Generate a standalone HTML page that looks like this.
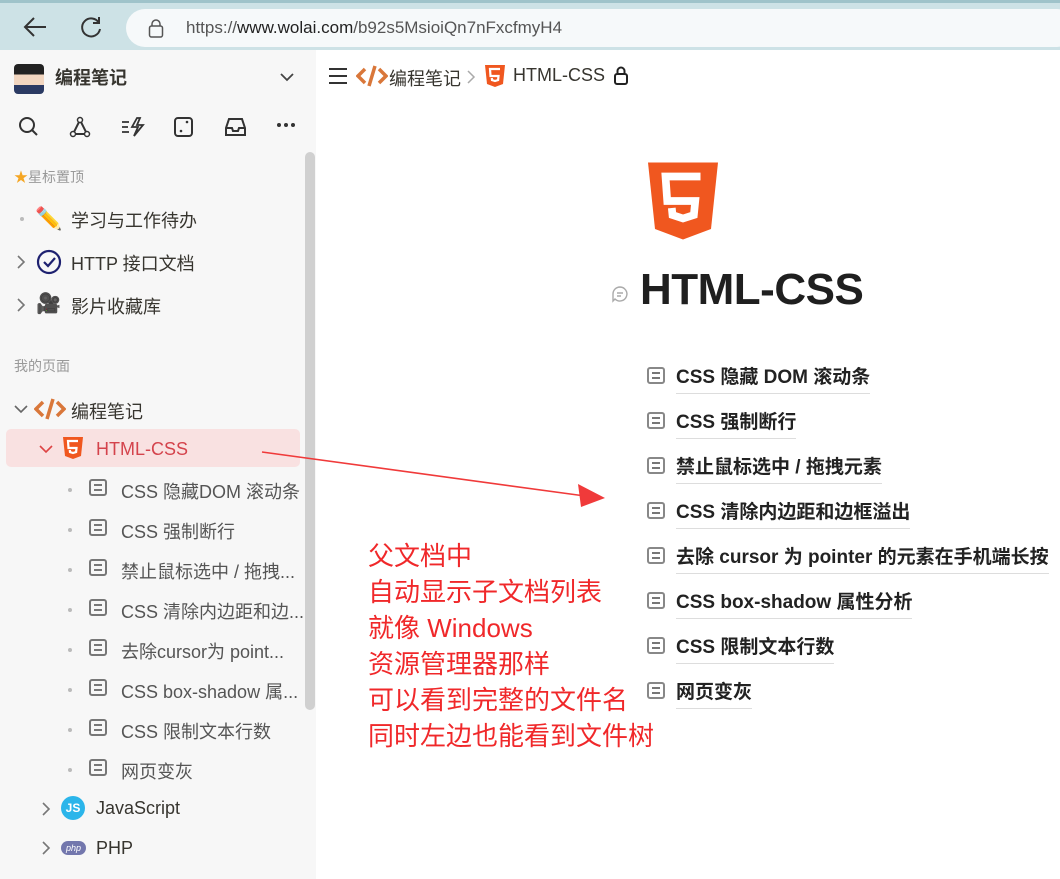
<!DOCTYPE html>
<html><head><meta charset="utf-8"><style>
*{margin:0;padding:0;box-sizing:border-box}
body{width:1060px;height:879px;overflow:hidden;font-family:"Liberation Sans","Noto Sans CJK SC",sans-serif;background:#fff;position:relative;color:#37352f}
.top{position:absolute;left:0;top:0;width:1060px;height:50px;background:#cde2e6;border-top:3px solid #9fc3ca}
.addr{position:absolute;left:126px;top:6px;width:950px;height:38px;background:#f6f9fa;border-radius:19px;font-size:17px;color:#555;line-height:38px;padding-left:60px}
.addr b{font-weight:normal;color:#222}
.side{position:absolute;left:0;top:50px;width:316px;height:829px;background:#f7f7f7}
.sb{position:absolute;left:305px;top:152px;width:10px;height:558px;background:#d0d0d0;border-radius:5px}
.t{position:absolute;font-size:18px;color:#37352f;white-space:nowrap}
.g{position:absolute;font-size:14px;color:#999}
.dot{position:absolute;width:4px;height:4px;border-radius:2px;background:#bbb}
.doc{position:absolute;width:18px;height:17px;border:2px solid #777;border-radius:3px}
.doc:before,.doc:after{content:"";position:absolute;left:3px;width:8px;height:2px;background:#777}
.doc:before{top:3px}.doc:after{top:8px}
.mt{position:absolute;font-size:19px;font-weight:bold;color:#222;white-space:nowrap;border-bottom:1px solid #ddd;padding-bottom:4px}
.red{position:absolute;left:368px;font-size:26px;color:#f0282a;white-space:nowrap;line-height:36px}
.cr{position:absolute}
</style></head><body>
<div class="top">
<svg style="position:absolute;left:22px;top:12px" width="26" height="24" viewBox="0 0 26 24"><path d="M24 12H3M12 3L3 12l9 9" stroke="#333" stroke-width="2" fill="none"/></svg>
<svg style="position:absolute;left:78px;top:11px" width="26" height="26" viewBox="0 0 26 26"><path d="M21 9A9 9 0 1 0 22 15M21 3v6h-6" stroke="#333" stroke-width="2" fill="none"/></svg>
<div class="addr"><svg style="position:absolute;left:22px;top:10px" width="16" height="19" viewBox="0 0 16 19"><rect x="1.5" y="7" width="13" height="11" rx="2" stroke="#555" stroke-width="1.5" fill="none"/><path d="M4 7V5a4 4 0 0 1 8 0v2" stroke="#555" stroke-width="1.5" fill="none"/></svg>https://<b>www.wolai.com</b>/b92s5MsioiQn7nFxcfmyH4</div>
</div>
<div class="side">
<div style="position:absolute;left:14px;top:14px;width:30px;height:30px;border-radius:4px;background:linear-gradient(#222 0 35%,#f2d6c0 35% 70%,#2b3a63 70%)"></div>
<div class="t" style="left:55px;top:14px;font-weight:bold">编程笔记</div>
<svg style="position:absolute;left:280px;top:22px" width="14" height="10"><path d="M1 2l6 6 6-6" stroke="#444" stroke-width="1.8" fill="none"/></svg>
<svg style="position:absolute;left:18px;top:66px" width="22" height="22"><circle cx="9" cy="9" r="7" stroke="#333" stroke-width="2" fill="none"/><path d="M14 14l5 5" stroke="#333" stroke-width="2"/></svg>
<svg style="position:absolute;left:69px;top:66px" width="22" height="22"><path d="M11 4L4 18h14z" stroke="#333" stroke-width="2" fill="none"/><circle cx="11" cy="4" r="2.5" fill="#fff" stroke="#333" stroke-width="1.5"/><circle cx="4" cy="18" r="2.5" fill="#fff" stroke="#333" stroke-width="1.5"/><circle cx="18" cy="18" r="2.5" fill="#fff" stroke="#333" stroke-width="1.5"/></svg>
<svg style="position:absolute;left:121px;top:66px" width="24" height="22"><path d="M1 6h7M1 11h6M1 16h7M16 2l-5 9h6l-4 9 9-11h-6l3-7z" stroke="#333" stroke-width="1.8" fill="none"/></svg>
<svg style="position:absolute;left:173px;top:66px" width="22" height="22"><rect x="2" y="2" width="17" height="18" rx="3" stroke="#333" stroke-width="2" fill="none"/><circle cx="14" cy="6" r="1.3" fill="#333"/><circle cx="8" cy="15" r="1.3" fill="#333"/></svg>
<svg style="position:absolute;left:224px;top:66px" width="24" height="22"><path d="M2 12l3-9h13l3 9v7H2zM2 12h6l1 3h5l1-3h6" stroke="#333" stroke-width="2" fill="none"/></svg>
<svg style="position:absolute;left:276px;top:72px" width="20" height="6"><circle cx="3" cy="3" r="2" fill="#333"/><circle cx="10" cy="3" r="2" fill="#333"/><circle cx="17" cy="3" r="2" fill="#333"/></svg>
<div class="g" style="left:14px;top:117px"><span style="color:#f5a623">★</span>星标置顶</div>
<div class="dot" style="left:20px;top:167px"></div>
<div class="t" style="left:35px;top:156px;font-size:22px">✏️</div>
<div class="t" style="left:71px;top:157px">学习与工作待办</div>
<svg class="cr" style="left:16px;top:205px" width="10" height="14"><path d="M2 1l6 6-6 6" stroke="#777" stroke-width="1.6" fill="none"/></svg>
<svg style="position:absolute;left:36px;top:199px" width="26" height="26"><circle cx="13" cy="13" r="11" stroke="#1e2170" stroke-width="2.2" fill="none"/><path d="M8 13l4 4 7-8" stroke="#1e2170" stroke-width="2.2" fill="none"/></svg>
<div class="t" style="left:71px;top:200px">HTTP 接口文档</div>
<svg class="cr" style="left:16px;top:248px" width="10" height="14"><path d="M2 1l6 6-6 6" stroke="#777" stroke-width="1.6" fill="none"/></svg>
<div class="t" style="left:36px;top:241px;font-size:20px">🎥</div>
<div class="t" style="left:71px;top:243px">影片收藏库</div>
<div class="g" style="left:14px;top:306px">我的页面</div>
<svg style="position:absolute;left:14px;top:354px" width="14" height="10"><path d="M1 2l6 6 6-6" stroke="#666" stroke-width="1.6" fill="none"/></svg>
<svg style="position:absolute;left:34px;top:347px" width="32" height="24"><path d="M9 5L2 12l7 7M23 5l7 7-7 7M19 2l-6 20" stroke="#d9773a" stroke-width="3.5" fill="none"/></svg>
<div class="t" style="left:71px;top:348px">编程笔记</div>
<div style="position:absolute;left:6px;top:379px;width:294px;height:38px;background:#f9e1e1;border-radius:5px"></div>
<svg style="position:absolute;left:39px;top:394px" width="14" height="10"><path d="M1 2l6 6 6-6" stroke="#d44" stroke-width="1.6" fill="none"/></svg>
<svg style="position:absolute;left:63px;top:387px" width="20" height="22" viewBox="0 0 20 22"><path d="M0 0h20l-2 19-8 3-8-3z" fill="#f0571f"/><path d="M15 4H5l.5 7h8l-.4 4L10 16l-3-1-.2-2" stroke="#fff" stroke-width="2.2" fill="none"/></svg>
<div class="t" style="left:96px;top:389px;color:#d4434c">HTML-CSS</div>
</div>
<div class="sb"></div>
<div style="position:absolute;left:0;top:0">
<div class="dot" style="left:68px;top:488px"></div><div class="doc" style="left:89px;top:479px"></div><div class="t" style="left:121px;top:478px;color:#555">CSS 隐藏DOM 滚动条</div>
<div class="dot" style="left:68px;top:528px"></div><div class="doc" style="left:89px;top:519px"></div><div class="t" style="left:121px;top:518px;color:#555">CSS 强制断行</div>
<div class="dot" style="left:68px;top:568px"></div><div class="doc" style="left:89px;top:559px"></div><div class="t" style="left:121px;top:558px;color:#555">禁止鼠标选中 / 拖拽...</div>
<div class="dot" style="left:68px;top:608px"></div><div class="doc" style="left:89px;top:599px"></div><div class="t" style="left:121px;top:598px;color:#555">CSS 清除内边距和边...</div>
<div class="dot" style="left:68px;top:648px"></div><div class="doc" style="left:89px;top:639px"></div><div class="t" style="left:121px;top:638px;color:#555">去除cursor为 point...</div>
<div class="dot" style="left:68px;top:688px"></div><div class="doc" style="left:89px;top:679px"></div><div class="t" style="left:121px;top:678px;color:#555">CSS box-shadow 属...</div>
<div class="dot" style="left:68px;top:728px"></div><div class="doc" style="left:89px;top:719px"></div><div class="t" style="left:121px;top:718px;color:#555">CSS 限制文本行数</div>
<div class="dot" style="left:68px;top:768px"></div><div class="doc" style="left:89px;top:759px"></div><div class="t" style="left:121px;top:758px;color:#555">网页变灰</div>
<svg class="cr" style="left:41px;top:802px" width="10" height="14"><path d="M2 1l6 6-6 6" stroke="#777" stroke-width="1.6" fill="none"/></svg>
<div style="position:absolute;left:61px;top:796px;width:24px;height:24px;border-radius:12px;background:#2bb5ea;color:#fff;font-size:12px;font-weight:bold;text-align:center;line-height:24px">JS</div>
<div class="t" style="left:96px;top:798px">JavaScript</div>
<svg class="cr" style="left:41px;top:841px" width="10" height="14"><path d="M2 1l6 6-6 6" stroke="#777" stroke-width="1.6" fill="none"/></svg>
<div style="position:absolute;left:61px;top:841px;width:25px;height:14px;border-radius:7px;background:#7377ad;color:#fff;font-size:9px;font-style:italic;text-align:center;line-height:14px">php</div>
<div class="t" style="left:96px;top:838px">PHP</div>
</div>
<!-- main -->
<div style="position:absolute;left:329px;top:68px;width:18px;height:16px;border-top:2px solid #333;border-bottom:2px solid #333"><div style="margin-top:5px;height:2px;background:#333"></div></div>
<svg style="position:absolute;left:356px;top:64px" width="32" height="24"><path d="M9 5L2 12l7 7M23 5l7 7-7 7M19 2l-6 20" stroke="#d9773a" stroke-width="3.5" fill="none"/></svg>
<div class="t" style="left:389px;top:65px">编程笔记</div>
<svg class="cr" style="left:466px;top:70px" width="10" height="14"><path d="M2 1l6 6-6 6" stroke="#aaa" stroke-width="1.5" fill="none"/></svg>
<svg style="position:absolute;left:485px;top:65px" width="20" height="22" viewBox="0 0 20 22"><path d="M0 0h20l-2 19-8 3-8-3z" fill="#f0571f"/><path d="M15 4H5l.5 7h8l-.4 4L10 16l-3-1-.2-2" stroke="#fff" stroke-width="2.2" fill="none"/></svg>
<div class="t" style="left:513px;top:65px">HTML-CSS</div>
<svg style="position:absolute;left:613px;top:66px" width="16" height="20"><rect x="2" y="8" width="12" height="10" rx="2" stroke="#222" stroke-width="2" fill="none"/><path d="M4.5 8V5a3.5 3.5 0 0 1 7 0v3" stroke="#222" stroke-width="2" fill="none"/></svg>
<svg style="position:absolute;left:648px;top:162px" width="70" height="78" viewBox="0 0 20 22"><path d="M0 0h20l-2 19-8 3-8-3z" fill="#f0571f"/><path d="M15 4H5l.5 7h8l-.4 4L10 16l-3-1-.2-2" stroke="#fff" stroke-width="2.2" fill="none"/></svg>
<svg style="position:absolute;left:611px;top:285px" width="18" height="18"><path d="M9 2a7 7 0 1 1-5 12l-2 2V9a7 7 0 0 1 7-7zM6 8h6M6 11h4" stroke="#aaa" stroke-width="1.4" fill="none"/></svg>
<div style="position:absolute;left:640px;top:265px;font-size:44px;font-weight:bold;color:#1f1f1f;white-space:nowrap;letter-spacing:-0.5px">HTML-CSS</div>
<div class="doc" style="left:647px;top:367px;border-color:#888"></div><div class="mt" style="left:676px;top:362px">CSS 隐藏 DOM 滚动条</div>
<div class="doc" style="left:647px;top:412px;border-color:#888"></div><div class="mt" style="left:676px;top:407px">CSS 强制断行</div>
<div class="doc" style="left:647px;top:457px;border-color:#888"></div><div class="mt" style="left:676px;top:452px">禁止鼠标选中 / 拖拽元素</div>
<div class="doc" style="left:647px;top:502px;border-color:#888"></div><div class="mt" style="left:676px;top:497px">CSS 清除内边距和边框溢出</div>
<div class="doc" style="left:647px;top:547px;border-color:#888"></div><div class="mt" style="left:676px;top:542px">去除 cursor 为 pointer 的元素在手机端长按</div>
<div class="doc" style="left:647px;top:592px;border-color:#888"></div><div class="mt" style="left:676px;top:587px">CSS box-shadow 属性分析</div>
<div class="doc" style="left:647px;top:637px;border-color:#888"></div><div class="mt" style="left:676px;top:632px">CSS 限制文本行数</div>
<div class="doc" style="left:647px;top:682px;border-color:#888"></div><div class="mt" style="left:676px;top:677px">网页变灰</div>
<svg style="position:absolute;left:0;top:0" width="1060" height="879"><path d="M262 452L585 496" stroke="#f03a3a" stroke-width="1.6"/><path d="M605 498L578 484L581 507z" fill="#f03a3a"/></svg>
<div class="red" style="top:538px">父文档中</div>
<div class="red" style="top:574px">自动显示子文档列表</div>
<div class="red" style="top:610px">就像 Windows</div>
<div class="red" style="top:646px">资源管理器那样</div>
<div class="red" style="top:682px">可以看到完整的文件名</div>
<div class="red" style="top:718px">同时左边也能看到文件树</div>
</body></html>
